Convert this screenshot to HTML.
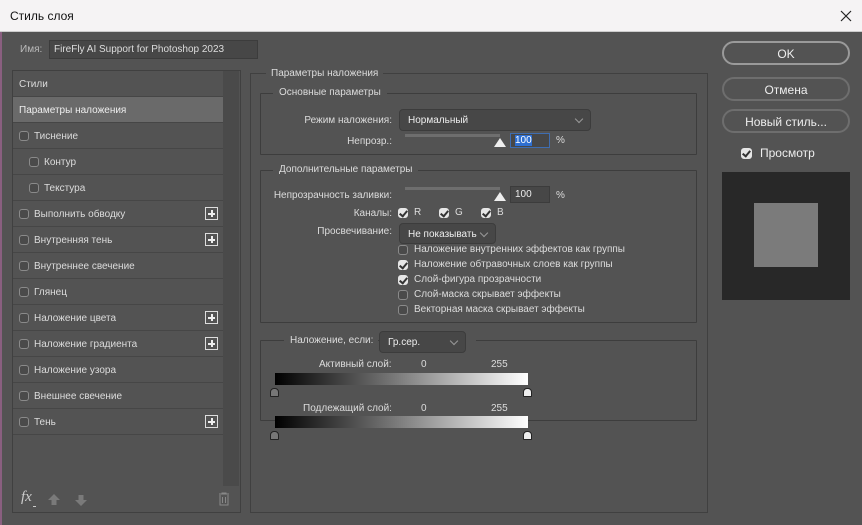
<!DOCTYPE html>
<html><head><meta charset="utf-8"><style>
*{box-sizing:border-box;margin:0;padding:0}
body{width:862px;height:525px;overflow:hidden;background:#535353;font-family:"Liberation Sans","DejaVu Sans",sans-serif;font-size:10px;color:#dcdcdc;position:relative}
.a{position:absolute;white-space:nowrap}
.r{position:absolute;white-space:nowrap;right:470px}
.title{left:0;top:0;width:862px;height:32px;background:#f5f3f4;color:#111;font-size:12px;padding:9px 0 0 10px;border-bottom:1px solid #ccc}
.cb{position:absolute;width:10px;height:10px;border:1px solid #8a8a8a;border-radius:3px;background:#4a4a4a}
.cb.on{background:#e6e6e6;border-color:#e6e6e6}
.cb.on:after{content:"";position:absolute;left:2px;top:0px;width:3px;height:6px;border:solid #333;border-width:0 2px 2px 0;transform:rotate(40deg)}
.row{position:absolute;left:13px;width:210px;height:26px;border-bottom:1px solid #464646;padding:8px 0 0 6px}
.plus{position:absolute;right:5px;top:6px;width:13px;height:13px;border:1px solid #ddd}
.plus:before{content:"";position:absolute;left:2px;top:5px;width:7px;height:1.5px;background:#eee}
.plus:after{content:"";position:absolute;left:5px;top:2px;width:1.5px;height:7px;background:#eee}
.grp{position:absolute;border:1px solid #3d3d3d;border-radius:1px}
.leg{position:absolute;background:#535353;padding:0 6px;top:-7px}
.dd{position:absolute;background:#474747;border:1px solid #3c3c3c;border-radius:4px;padding:5px 0 0 8px;color:#eee}
.dd:after{content:"";position:absolute;right:8px;top:6px;width:5px;height:5px;border:solid #999;border-width:0 1px 1px 0;transform:rotate(45deg)}
.inp{position:absolute;background:#474747;border:1px solid #3c3c3c;padding:2px 0 0 4px;color:#eee}
.track{position:absolute;height:3px;background:#6e6e6e}
.thumb{position:absolute;width:0;height:0;border-left:6px solid transparent;border-right:6px solid transparent;border-bottom:9px solid #eee}
.btn{position:absolute;left:722px;width:128px;height:24px;border:2px solid #6e6e6e;border-radius:12px;text-align:center;font-size:12px;padding-top:4px;color:#eee}
.gt{position:absolute;width:9px;height:9px;border:1px solid #222;border-radius:4px 4px 1px 1px;background:#777}
</style></head><body>
<div class="a title">Стиль слоя</div>
<svg class="a" style="left:840px;top:10px" width="12" height="12"><path d="M1 1L11 11M11 1L1 11" stroke="#222" stroke-width="1.2"/></svg>
<div class="a" style="left:0;top:32px;width:2px;height:493px;background:#8a5f80"></div>
<div class="a" style="left:20px;top:44px;color:#bbb">Имя:</div>
<div class="inp" style="left:49px;top:40px;width:209px;height:19px;padding-top:3px;color:#ddd">FireFly AI Support for Photoshop 2023</div>

<div class="a" style="left:12px;top:70px;width:229px;height:443px;border:1px solid #404040"></div>
<div class="a" style="left:223px;top:71px;width:16px;height:415px;background:#4a4a4a"></div>
<div class="row" style="top:71px">Стили</div>
<div class="row" style="top:97px;background:#6a6a6a;color:#eee">Параметры наложения</div>
<div class="row" style="top:123px"><span class="cb" style="left:6px;top:8px"></span><span style="margin-left:15px">Тиснение</span></div>
<div class="row" style="top:149px"><span class="cb" style="left:16px;top:8px"></span><span style="margin-left:25px">Контур</span></div>
<div class="row" style="top:175px"><span class="cb" style="left:16px;top:8px"></span><span style="margin-left:25px">Текстура</span></div>
<div class="row" style="top:201px"><span class="cb" style="left:6px;top:8px"></span><span style="margin-left:15px">Выполнить обводку</span><span class="plus"></span></div>
<div class="row" style="top:227px"><span class="cb" style="left:6px;top:8px"></span><span style="margin-left:15px">Внутренняя тень</span><span class="plus"></span></div>
<div class="row" style="top:253px"><span class="cb" style="left:6px;top:8px"></span><span style="margin-left:15px">Внутреннее свечение</span></div>
<div class="row" style="top:279px"><span class="cb" style="left:6px;top:8px"></span><span style="margin-left:15px">Глянец</span></div>
<div class="row" style="top:305px"><span class="cb" style="left:6px;top:8px"></span><span style="margin-left:15px">Наложение цвета</span><span class="plus"></span></div>
<div class="row" style="top:331px"><span class="cb" style="left:6px;top:8px"></span><span style="margin-left:15px">Наложение градиента</span><span class="plus"></span></div>
<div class="row" style="top:357px"><span class="cb" style="left:6px;top:8px"></span><span style="margin-left:15px">Наложение узора</span></div>
<div class="row" style="top:383px"><span class="cb" style="left:6px;top:8px"></span><span style="margin-left:15px">Внешнее свечение</span></div>
<div class="row" style="top:409px"><span class="cb" style="left:6px;top:8px"></span><span style="margin-left:15px">Тень</span><span class="plus"></span></div>
<div class="a" style="left:21px;top:489px;font-size:15px;font-style:italic;font-family:'Liberation Serif',serif;color:#ccc">fx</div>
<div class="a" style="left:33px;top:506px;width:3px;height:1px;background:#ccc"></div>
<svg class="a" style="left:48px;top:494px" width="12" height="12"><path d="M6 0L12 6H8.5V11H3.5V6H0Z" fill="#7a7a7a"/></svg>
<svg class="a" style="left:75px;top:494px" width="12" height="12"><path d="M6 12L12 6H8.5V1H3.5V6H0Z" fill="#7a7a7a"/></svg>
<svg class="a" style="left:218px;top:492px" width="12" height="14"><path d="M1 2h10M4 2V1h4v1M2 3v10h8V3M4.5 5v6M7.5 5v6" stroke="#888" fill="none"/></svg>

<div class="a" style="left:250px;top:73px;width:458px;height:440px;border:1px solid #404040"></div>
<div class="a" style="left:266px;top:68px;background:#535353;padding:0 5px">Параметры наложения</div>
<div class="grp" style="left:260px;top:93px;width:437px;height:62px"><div class="leg" style="left:12px">Основные параметры</div></div>
<div class="r" style="top:115px">Режим наложения:</div>
<div class="dd" style="left:399px;top:109px;width:192px;height:22px">Нормальный</div>
<div class="r" style="top:136px">Непрозр.:</div>
<div class="track" style="left:405px;top:134px;width:95px"></div>
<div class="thumb" style="left:494px;top:138px"></div>
<div class="inp" style="left:510px;top:133px;width:40px;height:15px;padding-top:1px;border-color:#3f6db0"><span style="background:#2f6fd0;color:#fff">100</span></div>
<div class="a" style="left:556px;top:135px">%</div>

<div class="grp" style="left:260px;top:170px;width:437px;height:153px"><div class="leg" style="left:12px">Дополнительные параметры</div></div>
<div class="r" style="top:190px">Непрозрачность заливки:</div>
<div class="track" style="left:405px;top:187px;width:95px"></div>
<div class="thumb" style="left:494px;top:192px"></div>
<div class="inp" style="left:510px;top:186px;width:40px;height:17px">100</div>
<div class="a" style="left:556px;top:190px">%</div>
<div class="r" style="top:208px">Каналы:</div>
<span class="cb on" style="left:398px;top:208px"></span><div class="a" style="left:414px;top:207px">R</div>
<span class="cb on" style="left:439px;top:208px"></span><div class="a" style="left:455px;top:207px">G</div>
<span class="cb on" style="left:481px;top:208px"></span><div class="a" style="left:497px;top:207px">B</div>
<div class="r" style="top:226px">Просвечивание:</div>
<div class="dd" style="left:399px;top:223px;width:97px;height:21px">Не показывать</div>
<span class="cb" style="left:398px;top:245px"></span><div class="a" style="left:414px;top:244px">Наложение внутренних эффектов как группы</div>
<span class="cb on" style="left:398px;top:260px"></span><div class="a" style="left:414px;top:259px">Наложение обтравочных слоев как группы</div>
<span class="cb on" style="left:398px;top:275px"></span><div class="a" style="left:414px;top:274px">Слой-фигура прозрачности</div>
<span class="cb" style="left:398px;top:290px"></span><div class="a" style="left:414px;top:289px">Слой-маска скрывает эффекты</div>
<span class="cb" style="left:398px;top:305px"></span><div class="a" style="left:414px;top:304px">Векторная маска скрывает эффекты</div>

<div class="grp" style="left:260px;top:340px;width:437px;height:81px"></div>
<div class="a" style="left:284px;top:331px;width:94px;height:22px;background:#535353"></div>
<div class="a" style="left:290px;top:335px">Наложение, если:</div>
<div class="a" style="left:466px;top:331px;width:10px;height:20px;background:#535353"></div>
<div class="dd" style="left:379px;top:331px;width:87px;height:22px">Гр.сер.</div>
<div class="a" style="left:319px;top:359px">Активный слой:</div>
<div class="a" style="left:421px;top:359px">0</div>
<div class="a" style="left:491px;top:359px">255</div>
<div class="a" style="left:275px;top:373px;width:253px;height:12px;background:linear-gradient(90deg,#000,#fff)"></div>
<div class="gt" style="left:270px;top:388px"></div>
<div class="gt" style="left:523px;top:388px;background:#eee"></div>
<div class="a" style="left:303px;top:403px">Подлежащий слой:</div>
<div class="a" style="left:421px;top:403px">0</div>
<div class="a" style="left:491px;top:403px">255</div>
<div class="a" style="left:275px;top:416px;width:253px;height:12px;background:linear-gradient(90deg,#000,#fff)"></div>
<div class="gt" style="left:270px;top:431px"></div>
<div class="gt" style="left:523px;top:431px;background:#eee"></div>

<div class="btn" style="top:41px;border-color:#9a9a9a">OK</div>
<div class="btn" style="top:77px">Отмена</div>
<div class="btn" style="top:109px">Новый стиль...</div>
<span class="cb on" style="left:741px;top:148px;width:11px;height:11px"></span>
<div class="a" style="left:760px;top:146px;font-size:12px;color:#eee">Просмотр</div>
<div class="a" style="left:722px;top:172px;width:128px;height:128px;background:#282828"></div>
<div class="a" style="left:754px;top:203px;width:64px;height:64px;background:#7b7b7b"></div>
</body></html>
